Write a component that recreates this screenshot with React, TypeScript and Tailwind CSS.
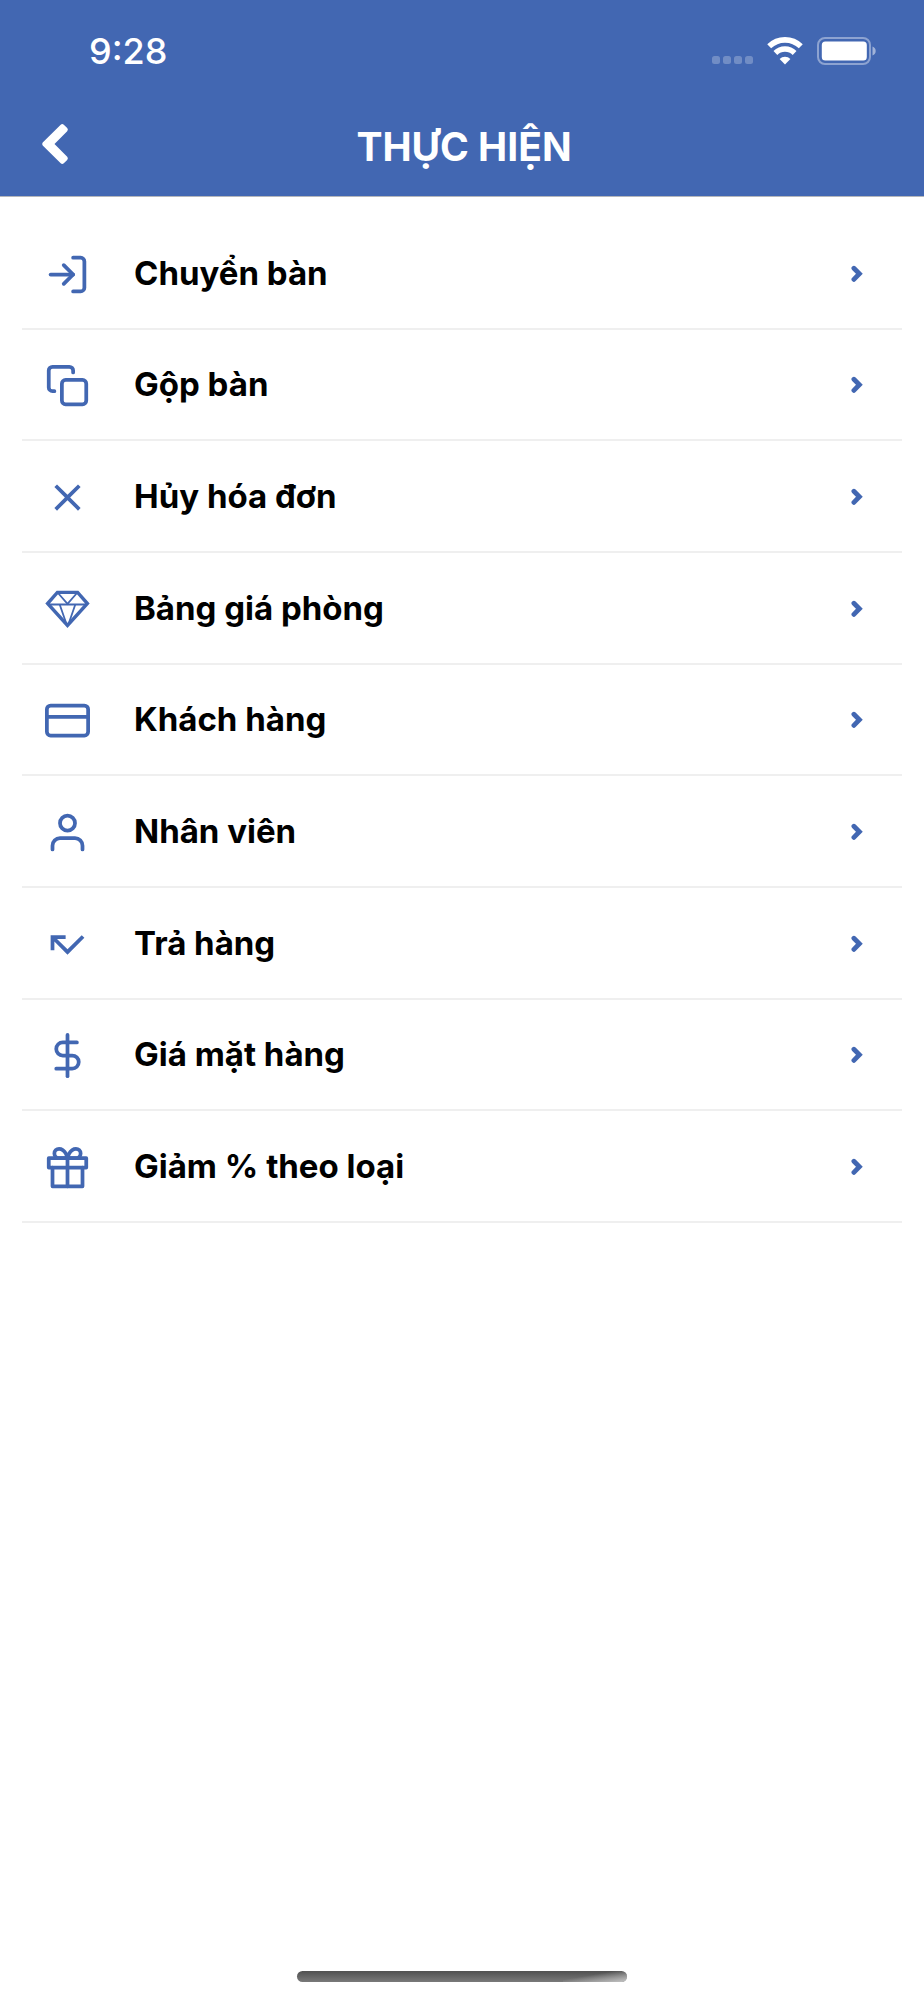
import React from "react";

type IconProps = { children: React.ReactNode };

function LineIcon({ children }: IconProps) {
  return (
    <svg
      viewBox="0 0 24 24"
      className="size-[45px]"
      fill="none"
      stroke="currentColor"
      strokeWidth="2"
      strokeLinecap="round"
      strokeLinejoin="round"
      aria-hidden="true"
    >
      {children}
    </svg>
  );
}

function SolidIcon({ children }: IconProps) {
  return (
    <svg viewBox="0 0 24 24" className="size-[45px]" fill="currentColor" aria-hidden="true">
      {children}
    </svg>
  );
}

const items: { label: string; icon: React.ReactNode }[] = [
  {
    label: "Chuyển bàn",
    icon: (
      <LineIcon>
        <path d="M15 3h4a2 2 0 0 1 2 2v14a2 2 0 0 1-2 2h-4" />
        <path d="M10 17l5-5-5-5" />
        <path d="M15 12H3" />
      </LineIcon>
    ),
  },
  {
    label: "Gộp bàn",
    icon: (
      <LineIcon>
        <rect x="9" y="9" width="13" height="13" rx="2" />
        <path d="M5 15H4a2 2 0 0 1-2-2V4a2 2 0 0 1 2-2h9a2 2 0 0 1 2 2v1" />
      </LineIcon>
    ),
  },
  {
    label: "Hủy hóa đơn",
    icon: (
      <SolidIcon>
        <path d="M19 6.41L17.59 5 12 10.59 6.41 5 5 6.41 10.59 12 5 17.59 6.41 19 12 13.41 17.59 19 19 17.59 13.41 12z" />
      </SolidIcon>
    ),
  },
  {
    label: "Bảng giá phòng",
    icon: (
      <svg viewBox="0 0 45 45" className="size-[45px]" fill="none" stroke="currentColor" aria-hidden="true">
        <path d="M12.4 5.4H32.6L42.4 16.5L22.5 38.4L2.600 16.5Z" strokeWidth="3.400" />
        <path d="M3 17.500H42" strokeWidth="1.800" />
        <path d="M13 6L22.5 16.800L32 6" strokeWidth="1.800" />
        <path d="M14.800 17.800L21.800 38M30.200 17.800L23.200 38" strokeWidth="1.800" />
      </svg>
    ),
  },
  {
    label: "Khách hàng",
    icon: (
      <LineIcon>
        <rect x="1" y="4" width="22" height="16" rx="2" />
        <path d="M1 10h22" />
      </LineIcon>
    ),
  },
  {
    label: "Nhân viên",
    icon: (
      <LineIcon>
        <path d="M20 21v-2a4 4 0 0 0-4-4H8a4 4 0 0 0-4 4v2" />
        <circle cx="12" cy="7" r="4" />
      </LineIcon>
    ),
  },
  {
    label: "Trả hàng",
    icon: (
      <SolidIcon>
        <path d="M19.59 7L12 14.59 6.41 9H11V7H3v8h2v-4.59l7 7 9-9z" />
      </SolidIcon>
    ),
  },
  {
    label: "Giá mặt hàng",
    icon: (
      <LineIcon>
        <path d="M12 1v22" />
        <path d="M17 5H9.5a3.5 3.5 0 0 0 0 7h5a3.5 3.5 0 0 1 0 7H6" />
      </LineIcon>
    ),
  },
  {
    label: "Giảm % theo loại",
    icon: (
      <LineIcon>
        <path d="M20 12v10H4V12" />
        <path d="M2 7h20v5H2z" />
        <path d="M12 22V7" />
        <path d="M12 7H7.5a2.5 2.5 0 0 1 0-5C11 2 12 7 12 7z" />
        <path d="M12 7h4.5a2.5 2.5 0 0 0 0-5C13 2 12 7 12 7z" />
      </LineIcon>
    ),
  },
];

function StatusBar() {
  return (
    <div className="flex h-[100px] items-center justify-between pt-[2px] pr-[47px] pl-[89px]">
      <time className="text-[36px] leading-[44px] font-medium">9:28</time>
      <div className="flex items-center">
        <svg viewBox="0 0 42 8" className="mt-[18px] h-[8px] w-[42px]" fill="#fff" fillOpacity="0.25" aria-hidden="true">
          <rect x="0" width="8" height="8" rx="2.5" />
          <rect x="11" width="8" height="8" rx="2.5" />
          <rect x="22" width="8" height="8" rx="2.5" />
          <rect x="33" width="8" height="8" rx="2.5" />
        </svg>
        <svg viewBox="0 0 36 28" className="ml-[13px] h-[28px] w-[36px]" fill="none" stroke="#fff" aria-hidden="true">
          <path d="M2.200 9.300A22.6 22.6 0 0 1 33.800 9.300" strokeWidth="5.600" />
          <path d="M8.400 16A13.600 13.600 0 0 1 27.600 16" strokeWidth="5.400" />
          <path d="M18 27.400L12.600 21.900A7.600 7.600 0 0 1 23.400 21.900Z" fill="#fff" stroke="none" />
        </svg>
        <svg viewBox="0 0 60 28" className="ml-[14px] h-[28px] w-[60px]" aria-hidden="true">
          <rect x="1" y="1" width="52" height="26" rx="7" fill="none" stroke="#fff" strokeOpacity="0.4" strokeWidth="2" />
          <rect x="4.800" y="4.500" width="45" height="19" rx="3.500" fill="#fff" />
          <path d="M55.500 9.500C57.500 10 58.700 12 58.700 14S57.500 18 55.500 18.500Z" fill="#fff" fillOpacity="0.5" />
        </svg>
      </div>
    </div>
  );
}

export default function App() {
  return (
    <div className="flex min-h-screen flex-col bg-white font-['Inter',sans-serif] text-black">
      <header className="border-b border-[#b4b6bb] bg-[#4267b2] text-white">
        <StatusBar />
        <div className="grid h-[96px] grid-cols-[96px_1fr_92px] items-center">
          <button type="button" aria-label="Quay lại" className="flex h-full items-center pb-[8px] pl-[41px]">
            <svg viewBox="0 0 30 42" className="h-[42px] w-[30px]" fill="#fff" aria-hidden="true">
              <path d="M1.700 19.500L19.700 1.700Q21.200 0.300 22.800 1.700L26.200 5Q27.600 6.600 26.200 8.200L13.500 21L26.200 33.800Q27.600 35.400 26.200 37L22.800 40.300Q21.200 41.700 19.700 40.300L1.700 22.500Q0.600 21 1.700 19.500Z" />
            </svg>
          </button>
          <h1 className="pb-[2px] text-center text-[39px] leading-[48px] font-bold">THỰC HIỆN</h1>
        </div>
      </header>

      <main className="flex-1 px-[22px] pt-[21px]">
        <ul className="grid min-h-[1005px] auto-rows-fr">
          {items.map(({ label, icon }) => (
            <li key={label} className="border-b-2 border-[#efefef]">
              <button type="button" className="flex h-full w-full items-center pr-[39px] pl-[23px] text-left">
                <span className="pt-[3px] text-[#4267b2]">{icon}</span>
                <span className="ml-[44px] flex-1 text-[33px] leading-[40px] font-bold">{label}</span>
                <svg viewBox="0 0 12 20" className="h-[20px] w-[12px] text-[#4267b2]" fill="none" stroke="currentColor" strokeWidth="4.800" strokeLinecap="round" aria-hidden="true">
                  <path d="M2.900 5.200L8.400 10.800L2.900 16.400" />
                </svg>
              </button>
            </li>
          ))}
        </ul>
      </main>

      <footer className="flex justify-center pb-[18px]">
        <div className="h-[11px] w-[330px] overflow-hidden rounded-full bg-linear-to-b from-[#505050] to-[#7a7a7a]">
          <div className="ml-auto h-full w-[64px] bg-linear-to-br from-transparent from-40% to-[#c4c4c4]" />
        </div>
      </footer>
    </div>
  );
}
